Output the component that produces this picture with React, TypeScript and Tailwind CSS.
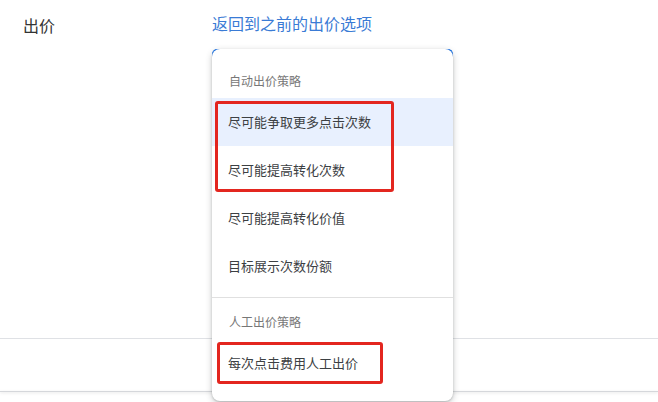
const autoItems = ['尽可能争取更多点击次数', '尽可能提高转化次数', '尽可能提高转化价值', '目标展示次数份额'];

const font = "font-['Noto_Sans_CJK_SC','Noto_Sans',sans-serif]";

export default function App() {
  return (
    <div className={`relative h-[402px] w-[658px] overflow-hidden bg-white ${font}`}>
      {/* page */}
      <div className="flex items-start pl-[23px] pt-[13px]">
        <span className="w-[189px] text-[16px] leading-6 text-[#333]">出价</span>
        <a className="-mt-[2px] text-[16px] leading-6 text-[#3a7bd5]">返回到之前的出价选项</a>
      </div>
      <div className="mt-[301px] border-t border-[#dfe1e5]" />
      <div className="mt-[52px] border-t border-[#d5d7db] shadow-[0_1px_3px_rgba(0,0,0,0.15)]" />

      {/* select field peeking under the menu */}
      <div className="absolute left-[212px] top-[49px] h-[12px] w-[241px] rounded-t-[5px] border-x-2 border-t-2 border-[#1a73e8]" />

      {/* dropdown menu */}
      <div className="absolute left-[212px] top-[49px] h-[352px] w-[241px] rounded-lg bg-white pt-2 shadow-[0_2px_6px_rgba(60,64,67,0.3),0_1px_2px_rgba(60,64,67,0.2)]">
        <div className="h-[41px] px-[17px] pt-[16px] text-[12px] leading-4 text-[#777]">自动出价策略</div>
        {autoItems.map((item, i) => (
          <div
            key={item}
            className={`flex h-12 items-center px-4 text-[13px] text-[#3c4043] ${i === 0 ? 'bg-[#e8f0fe]' : ''}`}
          >
            {item}
          </div>
        ))}
        <div className="mt-[7px] border-t border-[#e0e0e0]" />
        <div className="h-[41px] px-[17px] pt-[16px] text-[12px] leading-4 text-[#777]">人工出价策略</div>
        <div className="flex h-12 items-center px-4 text-[13px] text-[#3c4043]">每次点击费用人工出价</div>
      </div>

      {/* annotations */}
      <div className="absolute left-[215px] top-[101px] h-[91px] w-[179px] rounded-[3px] border-[3px] border-[#e3261f]" />
      <div className="absolute left-[217px] top-[342px] h-[42px] w-[166px] rounded-[3px] border-[3px] border-[#e3261f]" />
    </div>
  );
}
